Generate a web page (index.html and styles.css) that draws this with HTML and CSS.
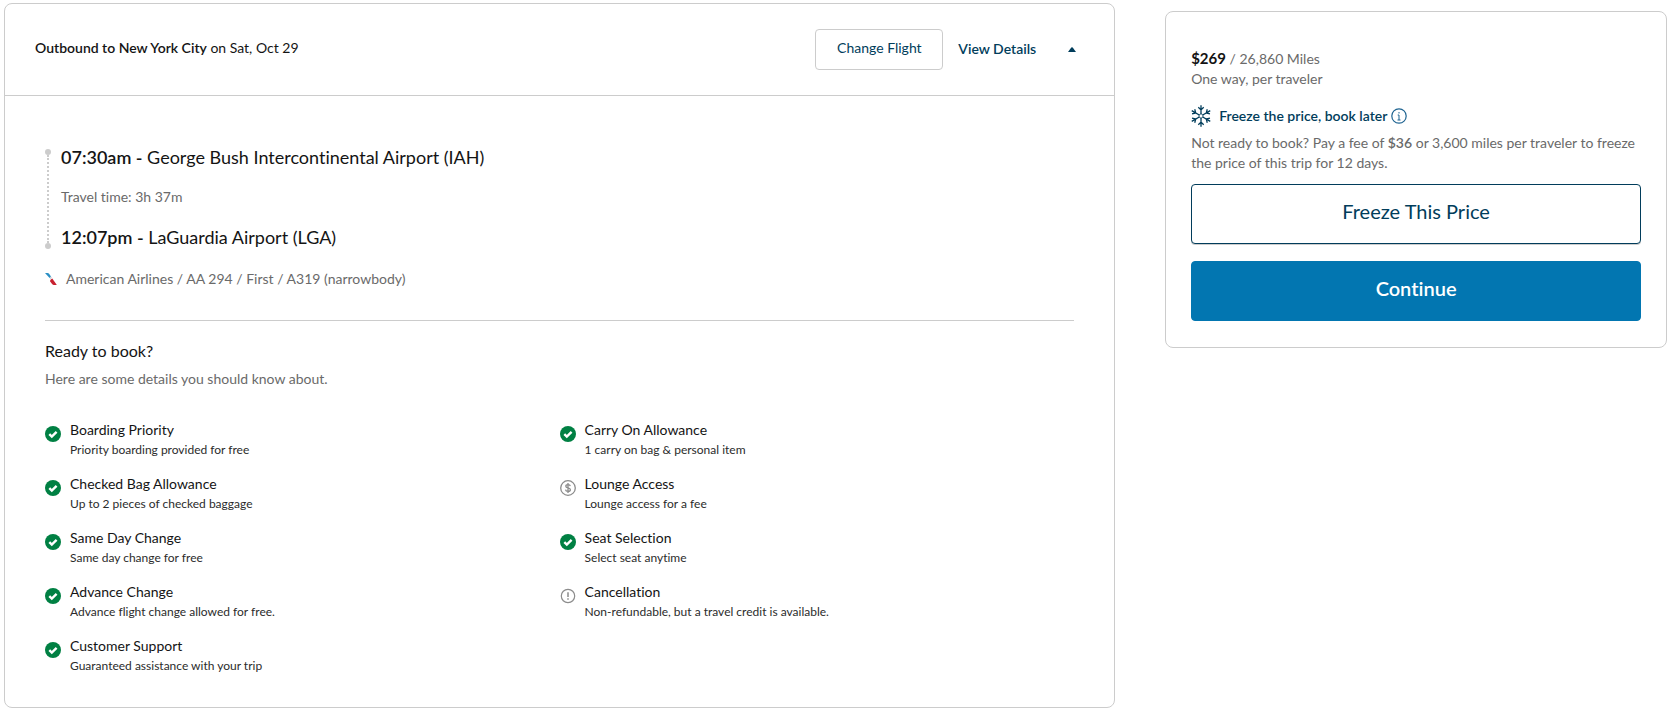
FILE: index.html
```html
<!DOCTYPE html>
<html lang="en">
<head>
    <meta charset="UTF-8">
    <meta name="viewport" content="width=device-width, initial-scale=1.0">
    <title>Review your flight</title>
    <link rel="stylesheet" href="styles.css">
</head>
<body>
    <!-- shared icons -->
    <svg class="sprite" aria-hidden="true">
        <symbol id="check" viewBox="0 0 16 16">
            <circle cx="8" cy="8" r="8" fill="#008043" />
            <path d="M4.3 8.2l2.5 2.4 4.8-4.8" fill="none" stroke="#fff" stroke-width="2.4" />
        </symbol>
        <symbol id="dollar" viewBox="0 0 16 16">
            <circle cx="8" cy="8" r="7.3" fill="none" stroke="#8c8c8c" stroke-width="1.3" />
            <path d="M10.3 6.1C10.1 5 9.2 4.6 8 4.6c-1.3 0-2.2.6-2.2 1.6 0 2.3 4.6 1.2 4.6 3.5 0 1.1-1 1.7-2.4 1.7-1.4 0-2.3-.6-2.5-1.7M8 3v10" fill="none" stroke="#8c8c8c" stroke-width="1.3" />
        </symbol>
        <symbol id="alert" viewBox="0 0 16 16">
            <circle cx="8" cy="8" r="6.7" fill="none" stroke="#8c8c8c" stroke-width="1.2" />
            <path d="M8 4.3v4.7M8 10.2v1.6" fill="none" stroke="#8c8c8c" stroke-width="1.5" />
        </symbol>
    </svg>

    <div class="container">
        <section class="card flight">
            <div class="flight-head">
                <p class="title"><b>Outbound to New York City</b> on Sat, Oct 29</p>
                <button class="change" type="button">Change Flight</button>
                <button class="details" type="button">View Details
                    <svg width="8" height="5" viewBox="0 0 8 5"><path d="M0 5L3.3.6Q4 0 4.7.6L8 5z" fill="#013d5b" /></svg>
                </button>
            </div>

            <div class="flight-body">
                <div class="route">
                    <div class="track"><span class="dot"></span><span class="line"></span><span class="dot"></span></div>
                    <div class="stops">
                        <p class="stop"><b>07:30am -</b> George Bush Intercontinental Airport (IAH)</p>
                        <p class="muted">Travel time: 3h 37m</p>
                        <p class="stop"><b>12:07pm -</b> LaGuardia Airport (LGA)</p>
                    </div>
                </div>
                <p class="airline muted">
                    <svg width="12" height="12" viewBox="0 0 12 12">
                        <path d="M0 0h2.6q.8 0 1.3.6L6 3.6 4.6 5z" fill="#2a8fc4" />
                        <path d="M4.6 5L6 3.6l1 1.4-1.6 1z" fill="#c5cdd3" />
                        <path d="M5 8.2Q4.8 6.300 7.300 5.400L11.800 12H8.800Q7.900 12 7.300 11.300z" fill="#c8202f" />
                    </svg>
                    American Airlines / AA 294 / First / A319 (narrowbody)
                </p>

                <div class="info">
                    <h2>Ready to book?</h2>
                    <p class="muted">Here are some details you should know about.</p>
                </div>

                <ul class="perks">
                    <li>
                        <svg class="icon"><use href="#check" /></svg>
                        <div><h3>Boarding Priority</h3><p>Priority boarding provided for free</p></div>
                    </li>
                    <li>
                        <svg class="icon"><use href="#check" /></svg>
                        <div><h3>Carry On Allowance</h3><p>1 carry on bag &amp; personal item</p></div>
                    </li>
                    <li>
                        <svg class="icon"><use href="#check" /></svg>
                        <div><h3>Checked Bag Allowance</h3><p>Up to 2 pieces of checked baggage</p></div>
                    </li>
                    <li>
                        <svg class="icon"><use href="#dollar" /></svg>
                        <div><h3>Lounge Access</h3><p>Lounge access for a fee</p></div>
                    </li>
                    <li>
                        <svg class="icon"><use href="#check" /></svg>
                        <div><h3>Same Day Change</h3><p>Same day change for free</p></div>
                    </li>
                    <li>
                        <svg class="icon"><use href="#check" /></svg>
                        <div><h3>Seat Selection</h3><p>Select seat anytime</p></div>
                    </li>
                    <li>
                        <svg class="icon"><use href="#check" /></svg>
                        <div><h3>Advance Change</h3><p>Advance flight change allowed for free.</p></div>
                    </li>
                    <li>
                        <svg class="icon"><use href="#alert" /></svg>
                        <div><h3>Cancellation</h3><p>Non-refundable, but a travel credit is available.</p></div>
                    </li>
                    <li>
                        <svg class="icon"><use href="#check" /></svg>
                        <div><h3>Customer Support</h3><p>Guaranteed assistance with your trip</p></div>
                    </li>
                </ul>
            </div>
        </section>

        <aside class="card price">
            <p class="muted"><b class="amount">$269</b> / 26,860 Miles</p>
            <p class="muted">One way, per traveler</p>
            <div class="freeze-head">
                <svg width="20" height="22" viewBox="0 0 20 22" fill="none" stroke="#013d5b" stroke-width="1.3">
                    <g id="arm"><path d="M10 9V.3M7.3 2.2L10 4.9l2.7-2.7" /></g>
                    <use href="#arm" transform="rotate(60 10 11)" />
                    <use href="#arm" transform="rotate(120 10 11)" />
                    <use href="#arm" transform="rotate(180 10 11)" />
                    <use href="#arm" transform="rotate(240 10 11)" />
                    <use href="#arm" transform="rotate(300 10 11)" />
                    <path d="M10 8.8l1.9 1.1v2.2L10 13.2l-1.9-1.1V9.9z" stroke-width=".8" />
                </svg>
                <b>Freeze the price, book later</b>
                <button class="tip" type="button" aria-label="About price freeze">
                    <svg width="16" height="16" viewBox="0 0 16 16" fill="none" stroke="#1f6491">
                        <circle cx="8" cy="8" r="7.2" stroke-width="1.2" />
                        <path d="M8 4v1.5M6.7 7H8v5M6.5 12h3" />
                    </svg>
                </button>
            </div>
            <p class="muted">Not ready to book? Pay a fee of <b>$36</b> or 3,600 miles per traveler to freeze the price of this trip for 12 days.</p>
            <button class="action" type="button">Freeze This Price</button>
            <button class="action primary" type="button">Continue</button>
        </aside>
    </div>
</body>
</html>
```

FILE: styles.css
```css
* {
    box-sizing: border-box;
}

body {
    margin: 0;
    background: white;
    color: #141414;
    font-family: Lato, "Noto Sans", sans-serif;
    font-size: 14px;
    line-height: 20px;
    font-variant-ligatures: none;
}

p, h2, h3, ul {
    margin: 0;
    padding: 0;
    font-weight: normal;
}

b {
    font-weight: 600;
}

button {
    font-family: inherit;
    font-size: 14px;
    line-height: 20px;
    font-variant-ligatures: none;
    color: #013d5b;
    background: white;
    border: none;
    padding: 0;
    cursor: pointer;
}

.sprite {
    display: none;
}

.container {
    display: grid;
    grid-template-columns: 31fr 14fr;
    align-items: start;
    gap: 50px;
    padding: 3px 5px 4px 4px;
}

.card {
    border: 1px solid #cccccc;
    border-radius: 8px;
}

.muted {
    color: #6a6a6a;
}

.flight-head {
    display: flex;
    align-items: center;
    padding: 25px 38px 25px 30px;
    border-bottom: 1px solid #cccccc;
}

.title {
    flex: 1;
    padding-bottom: 4px;
}

.change {
    min-width: 128px;
    padding: 8px 20px 11px;
    border: 1px solid #cccccc;
    border-radius: 4px;
}

.details {
    display: flex;
    align-items: center;
    gap: 32px;
    margin-left: 15px;
    padding-bottom: 1px;
    font-weight: 600;
}

.flight-body {
    padding: 49px 40px 31px;
}

.route {
    display: flex;
    gap: 10px;
}

.track {
    display: flex;
    flex-direction: column;
    align-items: center;
    padding-top: 4px;
}

.dot {
    width: 6px;
    height: 6px;
    border-radius: 50%;
    background: #cccccc;
}

.line {
    flex: 1;
    border-left: 2px dotted #cccccc;
}

.stops {
    display: grid;
    gap: 18px;
}

.stop {
    font-size: 18px;
    line-height: 24px;
}

.airline {
    display: flex;
    align-items: center;
    gap: 9px;
    padding: 20px 0 31px;
    border-bottom: 1px solid #cccccc;
}

.info {
    display: grid;
    gap: 8px;
    padding: 20px 0 31px;
}

.info h2 {
    font-size: 16px;
    line-height: 20px;
}

.perks {
    display: grid;
    grid-template-columns: 1fr 1fr;
    row-gap: 14px;
    list-style: none;
}

.perks li {
    display: flex;
    gap: 9px;
}

.icon {
    width: 16px;
    height: 16px;
    margin-top: 6px;
}

.perks h3 {
    font-size: 14px;
    line-height: 20px;
}

.perks p {
    font-size: 12px;
    line-height: 20px;
    color: #2b2b2b;
}

.price {
    margin-top: 8px;
    padding: 36px 25px 26px;
}

.amount {
    font-size: 15px;
    font-weight: bold;
    color: #141414;
}

.freeze-head {
    display: flex;
    align-items: center;
    height: 24px;
    margin: 15px 0 5px;
    color: #013d5b;
}

.freeze-head b {
    margin: 0 4px 0 8px;
}

.tip {
    display: flex;
}

.action {
    display: block;
    width: 100%;
    margin-top: 11px;
    padding: 15px 0 21px;
    border: 1px solid #013d5b;
    border-radius: 4px;
    box-shadow: 0 1px #cccccc;
    font-size: 20px;
    line-height: 22px;
}

.primary {
    margin-top: 17px;
    border-color: #0276b1;
    box-shadow: none;
    background: #0276b1;
    color: white;
    font-weight: 600;
}
```
